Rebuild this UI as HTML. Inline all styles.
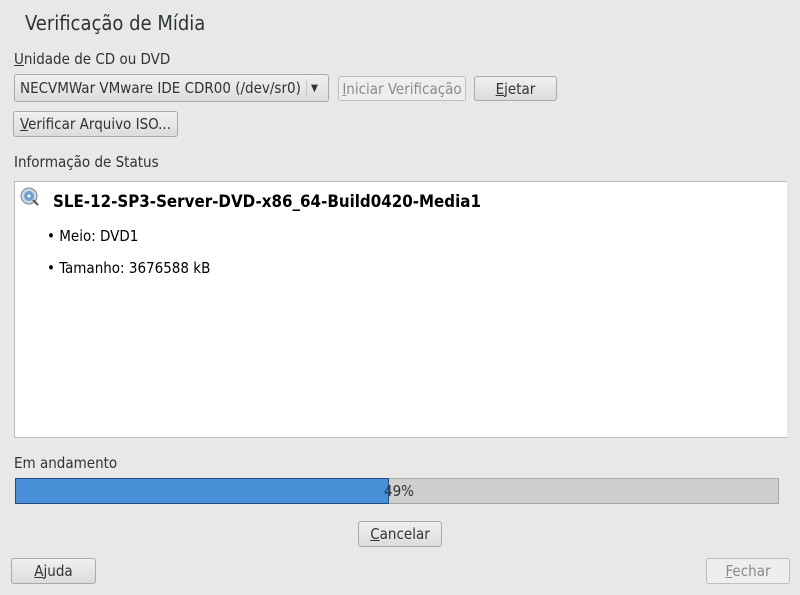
<!DOCTYPE html>
<html><head><meta charset="utf-8"><style>
*{box-sizing:border-box;margin:0;padding:0}
body{width:800px;height:595px;background:#e8e8e7;font-family:"DejaVu Sans Condensed","DejaVu Sans","Liberation Sans",sans-serif;font-size:15px;color:#2e3436;position:relative;overflow:hidden}
.a{position:absolute;white-space:nowrap}
.btn{position:absolute;border:1px solid #a9a9a7;border-radius:3px;background:linear-gradient(#f0f0ef,#dcdcda);text-align:center;line-height:24px;color:#2e3436}
u{text-decoration:underline}
</style></head><body>
<div class="a" style="left:25px;top:11px;font-size:20px">Verificação de Mídia</div>
<div class="a" style="left:14px;top:50px"><u>U</u>nidade de CD ou DVD</div>
<div class="btn" style="left:14px;top:74px;width:315px;height:28px;line-height:27px;text-align:left;padding-left:5px">NECVMWar VMware IDE CDR00 (/dev/sr0)<span style="position:absolute;left:291px;top:4px;width:1px;height:18px;background:#c8c8c6"></span><span style="position:absolute;left:296px;top:0;font-size:10px">▼</span></div>
<div class="btn" style="left:338px;top:76px;width:128px;height:25px;background:#eeeeec;color:#8a8c89;border-color:#bdbdbb"><u>I</u>niciar Verificação</div>
<div class="btn" style="left:474px;top:76px;width:83px;height:25px"><u>E</u>jetar</div>
<div class="btn" style="left:13px;top:111px;width:165px;height:26px"><u>V</u>erificar Arquivo ISO...</div>
<div class="a" style="left:14px;top:153px">Informação de Status</div>
<div class="a" style="left:14px;top:181px;width:773px;height:257px;background:#fff;border:1px solid #bcbcba;border-right:none">
<svg class="a" style="left:5px;top:5px" width="20" height="20" viewBox="0 0 20 20"><circle cx="9" cy="9" r="8" fill="#cfd6de" stroke="#7a8591"/><circle cx="9" cy="9" r="5" fill="#6fa0d6"/><circle cx="9" cy="9" r="1.5" fill="#fff"/><line x1="13" y1="13" x2="18" y2="18" stroke="#555" stroke-width="2"/></svg>
<div class="a" style="left:38px;top:9px;font-size:16.8px;font-weight:bold;color:#000">SLE-12-SP3-Server-DVD-x86_64-Build0420-Media1</div>
<div class="a" style="left:32px;top:45px;color:#000">• Meio: DVD1</div>
<div class="a" style="left:32px;top:77px;color:#000">• Tamanho: 3676588 kB</div>
</div>
<div class="a" style="left:14px;top:454px">Em andamento</div>
<div class="a" style="left:15px;top:478px;width:764px;height:26px;background:#cfcfcd;border:1px solid #a8a8a6"></div>
<div class="a" style="left:15px;top:478px;width:374px;height:26px;background:#4a90d9;border:1px solid #1f4e85"></div>
<div class="a" style="left:384px;top:482px">49%</div>
<div class="btn" style="left:358px;top:521px;width:84px;height:26px"><u>C</u>ancelar</div>
<div class="btn" style="left:11px;top:558px;width:85px;height:26px"><u>A</u>juda</div>
<div class="btn" style="left:706px;top:558px;width:84px;height:26px;background:#eeeeec;color:#8a8c89;border-color:#bdbdbb"><u>F</u>echar</div>
</body></html>
